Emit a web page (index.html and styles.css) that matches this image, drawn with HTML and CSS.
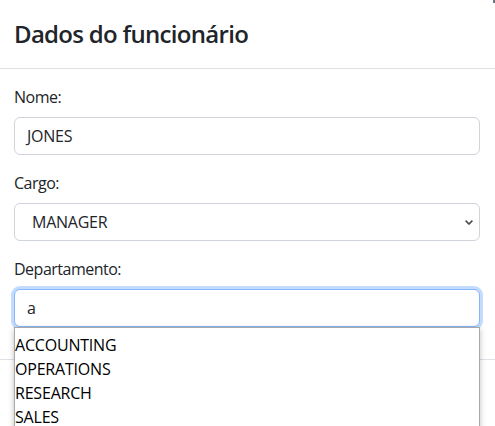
FILE: index.html
```html
<!DOCTYPE html>
<html lang="pt-BR">
<head>
<meta charset="utf-8">
<title>Dados do funcionário</title>
<link rel="stylesheet" href="styles.css">
</head>
<body>
<div class="modal">
  <div class="modal-header">
    <h4 class="modal-title">Dados do funcionário</h4>
    <span class="close-edge"></span>
  </div>
  <div class="modal-body">
    <div class="field">
      <label class="form-label">Nome:</label>
      <div class="form-control value">JONES</div>
    </div>
    <div class="field">
      <label class="form-label">Cargo:</label>
      <div class="form-select value">
        <span class="select-text">MANAGER</span>
        <svg class="chevron" width="8" height="5" viewBox="0 0 8 5"><path fill="none" stroke="#4a4a4a" stroke-width="1.6" d="M0.6 0.6L4 4L7.4 0.6"/></svg>
      </div>
    </div>
    <div class="field dept">
      <label class="form-label">Departamento:</label>
      <div class="form-control focused">a</div>
      <ul class="suggestions">
        <li>ACCOUNTING</li>
        <li>OPERATIONS</li>
        <li>RESEARCH</li>
        <li>SALES</li>
      </ul>
    </div>
  </div>
  <div class="modal-footer">
    <button class="btn btn-secondary">Fechar</button>
    <button class="btn btn-primary">Salvar</button>
  </div>
</div>
</body>
</html>
```
FILE: styles.css
```css
* { box-sizing: border-box; }
html, body { margin: 0; padding: 0; background: #fff; }
body {
  font-family: "Segoe UI", "Open Sans", "Noto Sans", "Liberation Sans", sans-serif;
  font-size: 16px;
  line-height: 1.5;
  color: #212529;
  overflow: hidden;
  min-height: 440px;
}
.modal { width: 495px; position: relative; min-height: 440px; }
.modal-header {
  position: relative;
  padding: 19px 15px 20px 14px;
  border-bottom: 1px solid #dee2e6;
}
.modal-title {
  margin: 0;
  font-size: 24px;
  font-weight: 600;
  line-height: 29px;
  letter-spacing: -0.7px;
}
.close-edge {
  position: absolute; right: 0; top: 0; width: 2px; height: 3px; background: #6c757d;
}
.modal-body { padding: 16px 15px 16px 14px; position: relative; }
.field { margin-bottom: 16px; }
.form-label { display: block; margin-bottom: 8px; line-height: 24px; letter-spacing: -0.5px; }
.form-control, .form-select {
  height: 38px;
  border: 1px solid #ced4da;
  border-radius: 6px;
  padding: 6px 12px;
  line-height: 24px;
  color: #212529;
  background: #fff;
}
.value { letter-spacing: -0.25px; }
.form-select {
  display: flex; align-items: center; justify-content: space-between;
  padding-left: 17px; padding-right: 6px;
}
.chevron { display: block; }
.focused {
  border-color: #86b7fe;
  box-shadow: 0 0 0 3px rgba(13,110,253,.25);
}
.dept { position: relative; }
.suggestions {
  position: absolute;
  left: 0; right: 0;
  top: 70px;
  margin: 0; padding: 5px 0 0;
  list-style: none;
  background: #fff;
  border: 1px solid #a8a8a8;
  box-shadow: 0 2px 6px rgba(0,0,0,.25);
  z-index: 5;
  color: #000;
  letter-spacing: -0.2px;
}
.suggestions li { padding-left: 0; line-height: 24px; height: 24px; }
.modal-footer {
  border-top: 1px solid #dee2e6;
  padding: 14px 15px 12px 14px;
  display: flex; justify-content: flex-end; gap: 8px;
}
.btn {
  font: inherit; border: 1px solid transparent; border-radius: 6px;
  padding: 4px 12px; line-height: 24px; color: #fff;
}
.btn-secondary { background: #6c757d; }
.btn-primary { background: #0b5ed7; }
```
